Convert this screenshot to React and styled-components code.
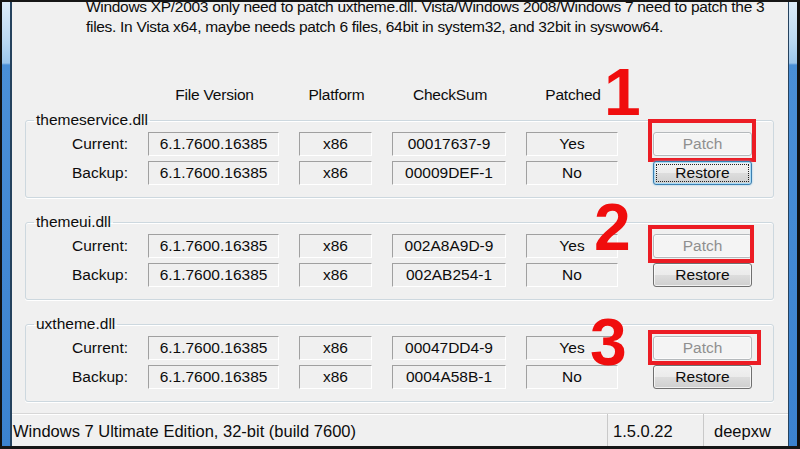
import styled, { createGlobalStyle, css } from "styled-components";

const Global = createGlobalStyle`
  html, body { margin: 0; padding: 0; background: #000; overflow: hidden; }
  * { box-sizing: border-box; }
`;

const FONT = `"Liberation Sans", Arial, sans-serif`;
const COLS = "102px 131px 73px 114px 92px 1fr";

const Window = styled.div`
  position: relative;
  width: 800px;
  height: 449px;
  display: flex;
  border-top: 2px solid #161616;
  border-bottom: 3px solid #161616;
  font-family: ${FONT};
  font-size: 15.5px;
  color: #0c0c0c;
`;

const Frame = styled.div`
  flex: none;
  width: ${(p) => p.$w}px;
  background: linear-gradient(to bottom, #dcecf9 0, #b9d8f2 40px, #9cc6ec 61px, #4a8fd7 63px, #3b82cf 100%);
  border-left: ${(p) => (p.$side === "left" ? "2px solid #111" : "1px solid #25425e")};
  border-right: ${(p) => (p.$side === "left" ? "2px solid #25425e" : "3px solid #111")};
`;

const Main = styled.div`
  flex: 1;
  display: flex;
  flex-direction: column;
  background: #f0f0f0;
  overflow: hidden;
`;

const Intro = styled.p`
  margin: -5px 0 0;
  padding-left: 74px;
  line-height: 20px;
  letter-spacing: -0.3px;
  white-space: nowrap;
`;

const Grid = styled.div`
  display: grid;
  grid-template-columns: ${COLS};
  column-gap: 20px;
  align-items: center;
`;

const HeaderRow = styled(Grid)`
  margin: 48px 14px 0;
  height: 20px;
  padding-left: 1px;
`;

const HeaderCell = styled.div`
  text-align: center;
  line-height: 20px;
  letter-spacing: -0.2px;
`;

const Group = styled.fieldset`
  margin: ${(p) => (p.$first ? "5px" : "14px")} 14px 0 13px;
  padding: 2px 0 12px;
  border: 1px solid #cdd8df;
  border-radius: 3px;
  box-shadow: inset 0 1px 0 #fff, 0 1px 0 #fff;
  min-width: 0;
`;

const Legend = styled.legend`
  margin-left: 8px;
  padding: 0 2px;
  line-height: 20px;
`;

const Rows = styled.div`
  display: flex;
  flex-direction: column;
  gap: 5px;
`;

const Label = styled.div`
  text-align: right;
  line-height: 24px;
`;

const Field = styled.div`
  height: 24px;
  line-height: 22px;
  text-align: center;
  border-top: 1px solid #a0a0a0;
  border-left: 1px solid #a0a0a0;
  border-bottom: 1px solid #fff;
  border-right: 1px solid #fff;
  white-space: nowrap;
`;

const ButtonCell = styled.div`
  position: relative;
  width: 99px;
  margin-left: 15px;
`;

const Button = styled.button`
  width: 99px;
  height: 24px;
  padding: 0;
  border-radius: 3px;
  font-family: ${FONT};
  font-size: 15.5px;
  line-height: 20px;
  color: #0c0c0c;
  border: 1px solid #707070;
  background: linear-gradient(to bottom, #f2f2f2 0%, #ebebeb 50%, #dddddd 50%, #cfcfcf 100%);
  box-shadow: inset 0 0 0 1px rgba(255, 255, 255, 0.7);
  ${(p) =>
    p.disabled &&
    css`
      color: #8f8f8f;
      border-color: #b5b9bc;
      background: #f4f4f4;
      box-shadow: inset 0 0 0 1px #fbfbfb;
    `}
  ${(p) =>
    p.$focused &&
    css`
      border-color: #3c7fb1;
      box-shadow: inset 0 0 0 1px #a9dbf6, 0 0 2px #7fc3ea;
      outline: 1px dotted #222;
      outline-offset: -4px;
    `}
`;

const RedBox = styled.div`
  position: absolute;
  top: ${(p) => p.$t}px;
  bottom: ${(p) => p.$b}px;
  left: ${(p) => p.$l}px;
  right: ${(p) => p.$r}px;
  border: 4px solid #ec1c24;
  pointer-events: none;
`;

const Marker = styled.div`
  position: absolute;
  left: ${(p) => p.$x}px;
  top: ${(p) => p.$y}px;
  font-family: ${FONT};
  font-weight: 700;
  font-size: 66px;
  line-height: 66px;
  color: #f00d0d;
`;

const StatusBar = styled.div`
  margin-top: auto;
  height: 33px;
  display: flex;
  border-top: 1px solid #d7d7d7;
  box-shadow: inset 0 1px 0 #fff;
  font-size: 16.5px;
`;

const StatusCell = styled.div`
  flex: ${(p) => (p.$w ? `0 0 ${p.$w}px` : 1)};
  padding-left: ${(p) => p.$pad}px;
  line-height: 34px;
  white-space: nowrap;
  border-left: ${(p) => (p.$sep ? "1px solid #c9c9c9" : "none")};
`;

const groups = [
  {
    name: "themeservice.dll",
    cur: "00017637-9",
    bak: "00009DEF-1",
    box: { t: -13, b: -6, l: -5, r: -4 },
    focused: true,
  },
  {
    name: "themeui.dll",
    cur: "002A8A9D-9",
    bak: "002AB254-1",
    box: { t: -9, b: -5, l: -5, r: -2 },
  },
  {
    name: "uxtheme.dll",
    cur: "00047DD4-9",
    bak: "0004A58B-1",
    box: { t: -6, b: -5, l: -5, r: -9 },
  },
];

function DllGroup({ g, first }) {
  return (
    <Group $first={first}>
      <Legend>{g.name}</Legend>
      <Rows>
        <Grid>
          <Label>Current:</Label>
          <Field>6.1.7600.16385</Field>
          <Field>x86</Field>
          <Field>{g.cur}</Field>
          <Field>Yes</Field>
          <ButtonCell>
            <Button disabled>Patch</Button>
            <RedBox $t={g.box.t} $b={g.box.b} $l={g.box.l} $r={g.box.r} />
          </ButtonCell>
        </Grid>
        <Grid>
          <Label>Backup:</Label>
          <Field>6.1.7600.16385</Field>
          <Field>x86</Field>
          <Field>{g.bak}</Field>
          <Field>No</Field>
          <ButtonCell>
            <Button $focused={g.focused}>Restore</Button>
          </ButtonCell>
        </Grid>
      </Rows>
    </Group>
  );
}

export default function App() {
  return (
    <>
      <Global />
      <Window>
        <Frame $side="left" $w={12} />
        <Main>
          <Intro>
            Windows XP/2003 only need to patch uxtheme.dll. Vista/Windows 2008/Windows 7 need to patch the 3
            <br />
            files. In Vista x64, maybe needs patch 6 files, 64bit in system32, and 32bit in syswow64.
          </Intro>
          <HeaderRow>
            <span />
            <HeaderCell>File Version</HeaderCell>
            <HeaderCell>Platform</HeaderCell>
            <HeaderCell>CheckSum</HeaderCell>
            <HeaderCell>Patched</HeaderCell>
          </HeaderRow>
          {groups.map((g, i) => (
            <DllGroup key={g.name} g={g} first={i === 0} />
          ))}
          <StatusBar>
            <StatusCell $pad={1}>Windows 7 Ultimate Edition, 32-bit (build 7600)</StatusCell>
            <StatusCell $w={96} $pad={5} $sep>1.5.0.22</StatusCell>
            <StatusCell $w={85} $pad={10} $sep>deepxw</StatusCell>
          </StatusBar>
        </Main>
        <Frame $side="right" $w={12} />
        <Marker $x={604} $y={57}>1</Marker>
        <Marker $x={594} $y={192}>2</Marker>
        <Marker $x={590} $y={307}>3</Marker>
      </Window>
    </>
  );
}
